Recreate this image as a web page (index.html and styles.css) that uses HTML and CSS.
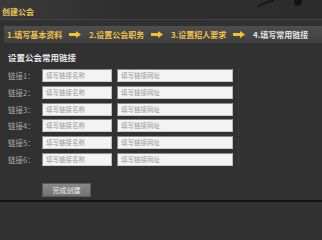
FILE: index.html
```html
<!DOCTYPE html>
<html lang="zh">
<head>
<meta charset="utf-8">
<link rel="stylesheet" href="styles.css">
</head>
<body>
<div class="panel">
  <div class="titlebar">
    <span class="title">创建公会</span>
    <svg class="scribble" width="50" height="8" viewBox="0 0 50 8"><path d="M0 7 Q8 1 16 1" stroke="#111" stroke-width="1.4" fill="none"/><path d="M36 0 L44 0 L43 5 L37 6 Z" fill="#111"/></svg>
  </div>
  <div class="steps">
    <span class="step">1.填写基本资料</span>
    <svg class="arrow" width="12" height="7" viewBox="0 0 12 7"><path d="M0 2 H7 V0 L12 3.5 L7 7 V5 H0 Z" fill="#f2c32a"/></svg>
    <span class="step">2.设置公会职务</span>
    <svg class="arrow" width="12" height="7" viewBox="0 0 12 7"><path d="M0 2 H7 V0 L12 3.5 L7 7 V5 H0 Z" fill="#f2c32a"/></svg>
    <span class="step">3.设置招人要求</span>
    <svg class="arrow" width="12" height="7" viewBox="0 0 12 7"><path d="M0 2 H7 V0 L12 3.5 L7 7 V5 H0 Z" fill="#f2c32a"/></svg>
    <span class="step current">4.填写常用链接</span>
  </div>
  <div class="section">
    <div class="heading">设置公会常用链接</div>
    <div class="form">
      <div class="row"><span class="label">链接1：</span><div class="input name">填写链接名称</div><div class="input url">填写链接网址</div></div>
      <div class="row"><span class="label">链接2：</span><div class="input name">填写链接名称</div><div class="input url">填写链接网址</div></div>
      <div class="row"><span class="label">链接3：</span><div class="input name">填写链接名称</div><div class="input url">填写链接网址</div></div>
      <div class="row"><span class="label">链接4：</span><div class="input name">填写链接名称</div><div class="input url">填写链接网址</div></div>
      <div class="row"><span class="label">链接5：</span><div class="input name">填写链接名称</div><div class="input url">填写链接网址</div></div>
      <div class="row"><span class="label">链接6：</span><div class="input name">填写链接名称</div><div class="input url">填写链接网址</div></div>
    </div>
    <div class="actions"><span class="button">完成创建</span></div>
  </div>
</div>
</body>
</html>
```

FILE: styles.css
```css
html, body {
  margin: 0;
  padding: 0;
  background: #313131;
}
body {
  width: 322px;
  height: 202px;
  overflow: hidden;
  font-family: "Noto Sans CJK SC", "Noto Sans", sans-serif;
}
.panel {
  width: 322px;
  height: 200px;
  border-bottom: 2px solid #141414;
  display: flex;
  flex-direction: column;
}
.titlebar {
  height: 19px;
  border-bottom: 1px solid #444;
  background: linear-gradient(90deg, #3a3a3a 0%, #2e2e2e 40%, #2c2c2c 100%);
  display: flex;
  align-items: flex-start;
  justify-content: space-between;
  padding-left: 2px;
}
.title {
  color: #e9c45a;
  font-size: 8px;
  font-weight: bold;
  line-height: 12px;
  margin-top: 6px;
}
.scribble {
  margin-right: 14px;
}
.steps {
  margin: 6px 0 0 4px;
  height: 17px;
  background: linear-gradient(180deg, #4e4e4e 0%, #454545 60%, #3f3f3f 100%);
  display: flex;
  align-items: center;
  padding-left: 3px;
}
.step {
  color: #eec24a;
  font-size: 8px;
  font-weight: bold;
  white-space: nowrap;
  width: 57px;
  flex: none;
}
.step.current {
  color: #e4e4e4;
}
.arrow {
  margin: 0 8px 0 5px;
  flex: none;
}
.section {
  padding-left: 8px;
}
.heading {
  color: #e6e6e6;
  font-size: 8.5px;
  font-weight: bold;
  margin-top: 7px;
  height: 14px;
  line-height: 14px;
}
.form {
  margin-top: 5px;
  width: 228px;
  display: flex;
  flex-direction: column;
  gap: 3.8px;
  border-right: 1px dotted #454545;
  padding-right: 2px;
}
.row {
  display: flex;
  align-items: center;
  height: 13px;
}
.label {
  width: 34px;
  color: #ababab;
  font-size: 7.5px;
  white-space: nowrap;
}
.input {
  height: 13px;
  box-sizing: border-box;
  background: #f3f3f3;
  border: 1px solid #8a8a8a;
  border-right-color: #bbb;
  border-bottom-color: #ccc;
  color: #999;
  font-size: 6.5px;
  line-height: 11px;
  padding-left: 3px;
  white-space: nowrap;
  overflow: hidden;
}
.input.name {
  width: 70px;
}
.input.url {
  width: 116px;
  margin-left: 5px;
}
.actions {
  margin-top: 8px;
  padding-left: 34px;
}
.button {
  display: inline-block;
  width: 49px;
  height: 14px;
  box-sizing: border-box;
  background: linear-gradient(180deg, #8a8a8a 0%, #727272 100%);
  border: 1px solid #5a5a5a;
  color: #eeeeee;
  font-size: 7px;
  line-height: 12px;
  text-align: center;
}
```
